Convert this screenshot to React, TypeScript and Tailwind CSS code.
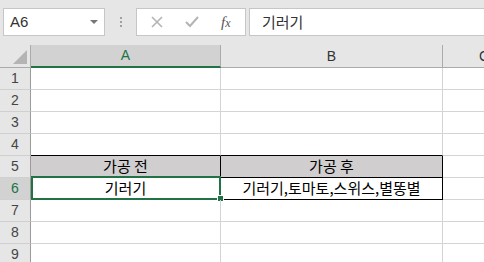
import React from 'react';

const FONT = { fontFamily: '"Noto Sans CJK KR", "Liberation Sans", sans-serif' };
const UI = { fontFamily: '"Liberation Sans", "Noto Sans CJK KR", sans-serif' };

// grid geometry (px): row header 31, A 190, B 222, C rest
const rows = [1, 2, 3, 4, 5, 6, 7, 8, 9];

const RowHeader = ({ n, active }: { n: number; active?: boolean }) => (
  <div
    style={UI}
    className={`w-[31px] shrink-0 flex items-center justify-center border-r border-b border-r-[#9b9b9b] border-b-[#d0d0d0] text-[14px] ${
      active ? 'bg-[#d2d2d2] text-[#217346]' : 'bg-[#e6e6e6] text-[#444]'
    }`}
  >
    {n}
  </div>
);

const Toolbar = () => (
  <div className="h-[45px] bg-[#e6e6e6] flex items-start pt-[8px] pl-[3px]">
    {/* name box */}
    <div className="w-[102px] h-[28px] bg-white border border-[#c6c6c6] flex items-center justify-between pl-[6px] pr-[6px]">
      <span style={UI} className="text-[15px] text-[#333]">A6</span>
      <svg width="8" height="5" viewBox="0 0 8 5">
        <path d="M0 0 L8 0 L4 4 Z" fill="#777" />
      </svg>
    </div>
    {/* grip dots */}
    <div className="w-[31px] h-[28px] flex flex-col items-center justify-center gap-[2px]">
      <span className="w-[2px] h-[2px] bg-[#a0a0a0]" />
      <span className="w-[2px] h-[2px] bg-[#a0a0a0]" />
      <span className="w-[2px] h-[2px] bg-[#a0a0a0]" />
    </div>
    {/* cancel / enter / fx */}
    <div className="w-[110px] h-[28px] bg-white border border-[#c6c6c6] flex items-center pl-[14px] gap-[22px]">
      <svg width="12" height="12" viewBox="0 0 12 12">
        <path d="M1 1 L11 11 M11 1 L1 11" stroke="#b4b4b4" strokeWidth="1.6" />
      </svg>
      <svg width="14" height="12" viewBox="0 0 14 12">
        <path d="M1 6 L5 10 L13 1" stroke="#b4b4b4" strokeWidth="2" fill="none" />
      </svg>
      <span
        className="text-[15px] italic text-[#555] leading-none"
        style={{ fontFamily: '"Liberation Serif", serif' }}
      >
        f<span className="text-[12px]">x</span>
      </span>
    </div>
    {/* formula input */}
    <div className="ml-[3px] flex-1 h-[28px] bg-white border border-r-0 border-[#c6c6c6] flex items-center pl-[12px]">
      <span style={FONT} className="text-[15px] text-[#333]">기러기</span>
    </div>
  </div>
);

const ColumnHeaders = () => (
  <div className="h-[23px] flex bg-[#e6e6e6]">
    <div className="w-[31px] shrink-0 border-r border-b border-[#ababab] flex items-end justify-end pr-[3px] pb-[3px]">
      <svg width="14" height="14" viewBox="0 0 14 14">
        <path d="M14 0 L14 14 L0 14 Z" fill="#b4b4b4" />
      </svg>
    </div>
    <div
      style={UI}
      className="w-[190px] shrink-0 bg-[#d2d2d2] border-r border-r-[#ababab] border-b-2 border-b-[#217346] flex items-center justify-center text-[14px] text-[#217346]"
    >
      A
    </div>
    <div
      style={UI}
      className="w-[222px] shrink-0 border-r border-b border-[#ababab] flex items-center justify-center text-[14px] text-[#333]"
    >
      B
    </div>
    <div
      style={UI}
      className="flex-1 border-b border-[#ababab] flex items-center pl-[36px] text-[14px] text-[#333]"
    >
      C
    </div>
  </div>
);

export default function App() {
  return (
    <div className="w-[484px] h-[262px] overflow-hidden bg-white">
      <Toolbar />
      <ColumnHeaders />
      {rows.map((n) => {
        const blackBottomA = n === 4 || n === 5;
        const blackBottomB = n === 4 || n === 5 || n === 6;
        return (
          <div key={n} className="h-[22px] flex">
            <RowHeader n={n} active={n === 6} />
            {/* column A */}
            <div
              style={FONT}
              className={`relative w-[190px] shrink-0 border-r border-b flex items-center justify-center text-[15px] text-black ${
                n === 5 ? 'bg-[#d0cece] border-r-black' : 'border-r-[#d4d4d4]'
              } ${blackBottomA ? 'border-b-black' : 'border-b-[#d4d4d4]'}`}
            >
              {n === 5 && '가공 전'}
              {n === 6 && (
                <>
                  기러기
                  {/* selection outline + fill handle */}
                  <div className="absolute left-0 -right-[1px] -top-[2px] -bottom-[1px] border-2 border-[#217346]" />
                  <div className="absolute -right-[4px] -bottom-[3px] w-[7px] h-[7px] bg-[#217346] border border-white" />
                </>
              )}
            </div>
            {/* column B */}
            <div
              style={FONT}
              className={`w-[222px] shrink-0 border-r border-b flex items-center justify-center text-[15px] text-black ${
                n === 5 ? 'bg-[#d0cece]' : ''
              } ${n === 5 || n === 6 ? 'border-r-black' : 'border-r-[#d4d4d4]'} ${
                blackBottomB ? 'border-b-black' : 'border-b-[#d4d4d4]'
              }`}
            >
              {n === 5 && '가공 후'}
              {n === 6 && '기러기,토마토,스위스,별똥별'}
            </div>
            {/* column C */}
            <div className="flex-1 border-b border-b-[#d4d4d4]" />
          </div>
        );
      })}
    </div>
  );
}
